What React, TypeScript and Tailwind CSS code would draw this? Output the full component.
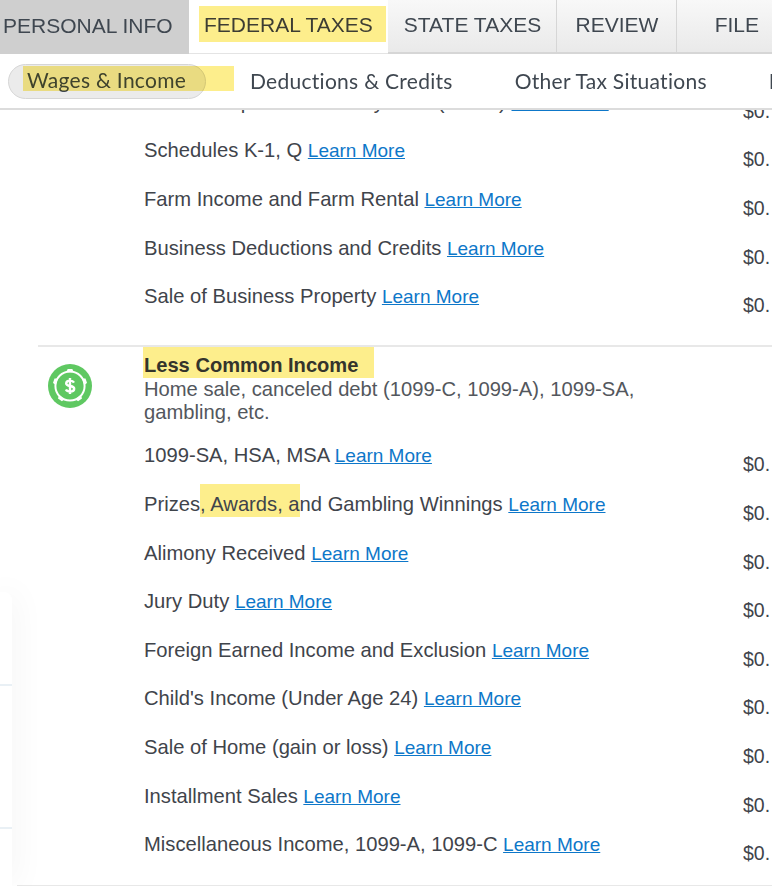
import { ReactNode } from 'react'

type RowProps = { label: ReactNode }

const ARIAL = 'font-["Liberation_Sans",Arial,sans-serif]'

const federalRows: ReactNode[] = [
  <span className="tracking-[0.13px]">Rental Properties and Royalties (Sch E)</span>,
  'Schedules K-1, Q',
  'Farm Income and Farm Rental',
  'Business Deductions and Credits',
  'Sale of Business Property',
]

const lessCommonRows: ReactNode[] = [
  '1099-SA, HSA, MSA',
  <>
    Prizes
    <span className="bg-[#fdee8c] pb-[2px] pt-[9px]">, Awards, a</span>
    nd Gambling Winnings
  </>,
  'Alimony Received',
  'Jury Duty',
  'Foreign Earned Income and Exclusion',
  "Child's Income (Under Age 24)",
  'Sale of Home (gain or loss)',
  'Installment Sales',
  'Miscellaneous Income, 1099-A, 1099-C',
]

const gearTeeth = [0, 72, 144, 216, 288]

function Row({ label }: RowProps) {
  return (
    <div className="flex h-[48.6px] items-start justify-between">
      <div className="text-[20.2px] leading-[24px] text-[#3f444b]">
        {label} <a className="text-[19px] text-[#0d77c9] underline">Learn More</a>
      </div>
      <div className="w-[29px] shrink-0 overflow-hidden pt-[9px] text-[19.5px] leading-[24px] text-[#3f444b]">$0.</div>
    </div>
  )
}

function IncomeIcon() {
  return (
    <svg viewBox="0 0 44 44" className="h-[44px] w-[44px]">
      <circle cx="22" cy="22" r="22" fill="#5fc862" />
      <circle cx="22" cy="22" r="14.6" fill="none" stroke="#fff" strokeWidth="2" />
      {gearTeeth.map((angle) => (
        <path key={angle} d="M18.5 8.2 19.6 4.9h4.8l1.1 3.3z" fill="#fff" transform={`rotate(${angle} 22 22)`} />
      ))}
      <path d="M26 18.6c-.7-1.3-2.1-2-3.9-2-2.3 0-3.9 1.1-3.9 2.8 0 3.7 8 1.6 8 5.3 0 1.7-1.7 2.9-4.1 2.9-2 0-3.5-.8-4.2-2.1M22 14v16" fill="none" stroke="#fff" strokeWidth="2.4" />
    </svg>
  )
}

function Tabs() {
  return (
    <div className={`flex h-[54px] bg-gradient-to-b from-[#f8f8f8] to-[#e9e9e9] text-[21px] text-[#3f4750] ${ARIAL}`}>
      <div className="flex w-[189px] items-center bg-[#cfcfcf] pb-[3px] pl-[3px]">PERSONAL INFO</div>
      <div className="flex w-[199px] items-start border-b border-[#e4e4e4] bg-white pl-[10px] pt-[6px]">
        <span className="flex h-[36px] w-[187px] items-center bg-[#fdee8c] pl-[5px] pt-[2px] text-[#3d3d33]">FEDERAL TAXES</span>
      </div>
      <div className="flex w-[169px] items-center justify-center border-r border-b-2 border-[#d6d6d6] pb-[2px] pl-[1px]">STATE TAXES</div>
      <div className="flex w-[120px] items-center justify-center border-r border-b-2 border-[#d6d6d6] pb-[2px] pl-[1px]">REVIEW</div>
      <div className="flex flex-1 items-center justify-end border-b-2 border-[#d6d6d6] pb-[2px] pr-[13px]">FILE</div>
    </div>
  )
}

function SubNav() {
  return (
    <div className="relative flex h-[56px] items-center overflow-hidden whitespace-nowrap border-b-2 border-[#dcdcdc] bg-white font-['Lato',sans-serif] text-[21px] tracking-[0.28px] text-[#3f4750]">
      <div className="ml-[8px] flex h-[35px] w-[198px] shrink-0 items-center rounded-full border border-[#d6d6d6] bg-[#ebebeb] pb-[2px] pl-[18px]">
        Wages &amp; Income
      </div>
      <span className="absolute left-[23px] top-[12px] h-[25px] w-[211px] bg-[#fdee8c] mix-blend-multiply" />
      <div className="mb-[1px] ml-[44px] shrink-0">Deductions &amp; Credits</div>
      <div className="mb-[1px] ml-[62px] shrink-0">Other Tax Situations</div>
      <div className="mb-[1px] ml-[62px] shrink-0">I</div>
    </div>
  )
}

export default function App() {
  return (
    <div className={`relative h-[886px] w-[772px] overflow-hidden bg-white ${ARIAL}`}>
      <div className="relative z-10">
        <Tabs />
        <SubNav />
      </div>

      <div className="mt-[-20.2px] pl-[38px]">
        <div className="pl-[106px]">
          {federalRows.map((row, i) => (
            <Row key={i} label={row} />
          ))}
        </div>

        <div className="mt-[12.2px] flex border-t-2 border-[#e8e8e8]">
          <div className="w-[106px] shrink-0 pl-[10px] pt-[17px]">
            <IncomeIcon />
          </div>
          <div className="min-w-0 flex-1">
            <div className="ml-[-1px] w-[231px] bg-[#fdee8c] pb-[1px] pl-[1px] pt-[7px] text-[20.1px] font-bold leading-[23px] text-[#34342c]">
              Less Common Income
            </div>
            <div className="w-[510px] text-[20.2px] leading-[23px] text-[#53575d]">
              Home sale, canceled debt (1099-C, 1099-A), 1099-SA, gambling, etc.
            </div>
            <div className="mt-[19.5px]">
              {lessCommonRows.map((row, i) => (
                <Row key={i} label={row} />
              ))}
            </div>
          </div>
        </div>
      </div>

      <div className="absolute bottom-0 left-[17px] right-0 h-[1px] bg-[#e8e8e8]" />

      <div className="absolute bottom-0 left-0 top-[592px] flex w-[12px] flex-col rounded-tr-[8px] bg-white shadow-[0_0_32px_rgba(0,0,0,0.08)]">
        <div className="h-[94px] border-b-2 border-[#e9f0f5]" />
        <div className="h-[143px] border-b-2 border-[#e9f0f5]" />
      </div>
    </div>
  )
}
